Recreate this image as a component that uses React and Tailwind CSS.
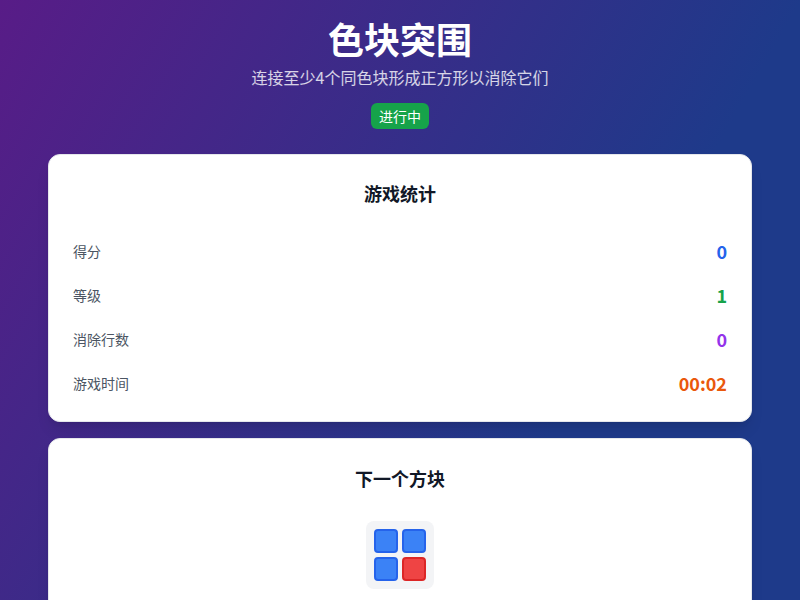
import React from 'react'

const stats = [
  { label: '得分', value: '0', color: 'text-[#2563eb]' },
  { label: '等级', value: '1', color: 'text-[#16a34a]' },
  { label: '消除行数', value: '0', color: 'text-[#9333ea]' },
  { label: '游戏时间', value: '00:02', color: 'text-[#ea580c]' },
]

const nextPiece = ['blue', 'blue', 'blue', 'red']

const App = () => {
  return (
    <div
      className="min-h-screen bg-fixed bg-[linear-gradient(120deg,#581c87,#1e3a8a_70%)] px-12 pt-[18px] pb-8"
      style={{ fontFamily: '"Noto Sans CJK SC", "Noto Sans", sans-serif' }}
    >
      {/* Header */}
      <div className="text-center">
        <h1 className="text-4xl font-bold text-white leading-10">色块突围</h1>
        <p className="mt-[7px] text-base leading-6 text-white/80">连接至少4个同色块形成正方形以消除它们</p>
        <div className="mt-[14px] flex justify-center">
          <span className="px-2 h-[26px] flex items-center rounded-md bg-[#16a34a] text-white text-sm leading-5">进行中</span>
        </div>
      </div>

      {/* Stats */}
      <div className="mt-[25px] bg-white rounded-xl border border-[#e5e7eb] shadow-lg p-6">
        <h2 className="text-lg font-bold text-[#111827] text-center leading-7">游戏统计</h2>
        <div className="mt-[30px] space-y-4">
          {stats.map(s => (
            <div key={s.label} className="flex items-center justify-between h-7">
              <span className="text-sm text-[#4b5563]">{s.label}</span>
              <span className={`text-lg font-bold ${s.color}`}>{s.value}</span>
            </div>
          ))}
        </div>
      </div>

      {/* Next piece */}
      <div className="mt-4 bg-white rounded-xl border border-[#e5e7eb] shadow-lg px-6 pt-[25px] pb-6">
        <h2 className="text-lg font-bold text-[#111827] text-center leading-7">下一个方块</h2>
        <div className="mt-[29px] flex justify-center">
          <div className="grid grid-cols-2 gap-1 p-2 bg-[#f3f4f6] rounded-lg">
            {nextPiece.map((c, i) => (
              <div
                key={i}
                className={
                  c === 'red'
                    ? 'w-6 h-6 rounded bg-[#ef4444] border-2 border-[#dc2626]'
                    : 'w-6 h-6 rounded bg-[#3b82f6] border-2 border-[#2563eb]'
                }
              />
            ))}
          </div>
        </div>
      </div>
    </div>
  )
}

export default App
